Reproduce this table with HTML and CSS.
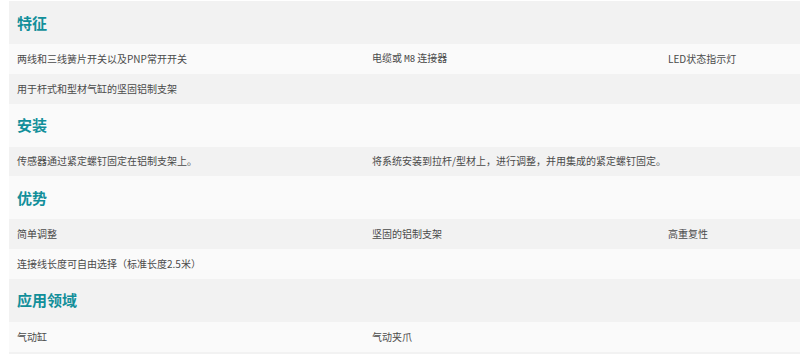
FILE: index.html
```html
<!DOCTYPE html>
<html lang="zh-CN">
<head>
<meta charset="utf-8">
<title>特征</title>
<link rel="stylesheet" href="styles.css">
</head>
<body>
<div class="spec">
  <div class="row head"><h2>特征</h2></div>
  <div class="row"><span>两线和三线簧片开关以及PNP常开开关</span><span>电缆或 <span class="mono">M8</span> 连接器</span><span>LED状态指示灯</span></div>
  <div class="row"><span>用于杆式和型材气缸的坚固铝制支架</span><span></span><span></span></div>
  <div class="row head"><h2>安装</h2></div>
  <div class="row"><span>传感器通过紧定螺钉固定在铝制支架上。</span><span class="wide">将系统安装到拉杆/型材上，进行调整，并用集成的紧定螺钉固定。</span></div>
  <div class="row head"><h2>优势</h2></div>
  <div class="row"><span>简单调整</span><span>坚固的铝制支架</span><span>高重复性</span></div>
  <div class="row"><span>连接线长度可自由选择（标准长度2.5米）</span><span></span><span></span></div>
  <div class="row head"><h2>应用领域</h2></div>
  <div class="row"><span>气动缸</span><span>气动夹爪</span><span></span></div>
  <div class="row"><span></span><span></span><span></span></div>
</div>
</body>
</html>
```

FILE: styles.css
```css
html, body {
  margin: 0;
  padding: 0;
  background: #ffffff;
}
body {
  font-family: "Noto Sans CJK SC", "Noto Sans", sans-serif;
  color: #4a4a4a;
}
.spec {
  padding: 1px 0 0 9px;
  display: flex;
  flex-direction: column;
}
.row {
  display: grid;
  grid-template-columns: 355px 296px 1fr;
  align-items: center;
  height: 29.8px;
  font-size: 10px;
  line-height: 12px;
  white-space: nowrap;
}
.row > span {
  padding-left: 8px;
}
.row .wide {
  grid-column: span 2;
}
.mono {
  padding: 0;
  font-family: "DejaVu Sans Mono", monospace;
  font-size: 9px;
}
.row:nth-child(odd) {
  background: #f2f2f2;
}
.row:nth-child(even) {
  background: #fafafa;
}
.head {
  display: flex;
  height: 43px;
}
.head h2 {
  margin: 0;
  padding-left: 8px;
  font-size: 15px;
  line-height: 18px;
  font-weight: 700;
  color: #128f9a;
}
```
